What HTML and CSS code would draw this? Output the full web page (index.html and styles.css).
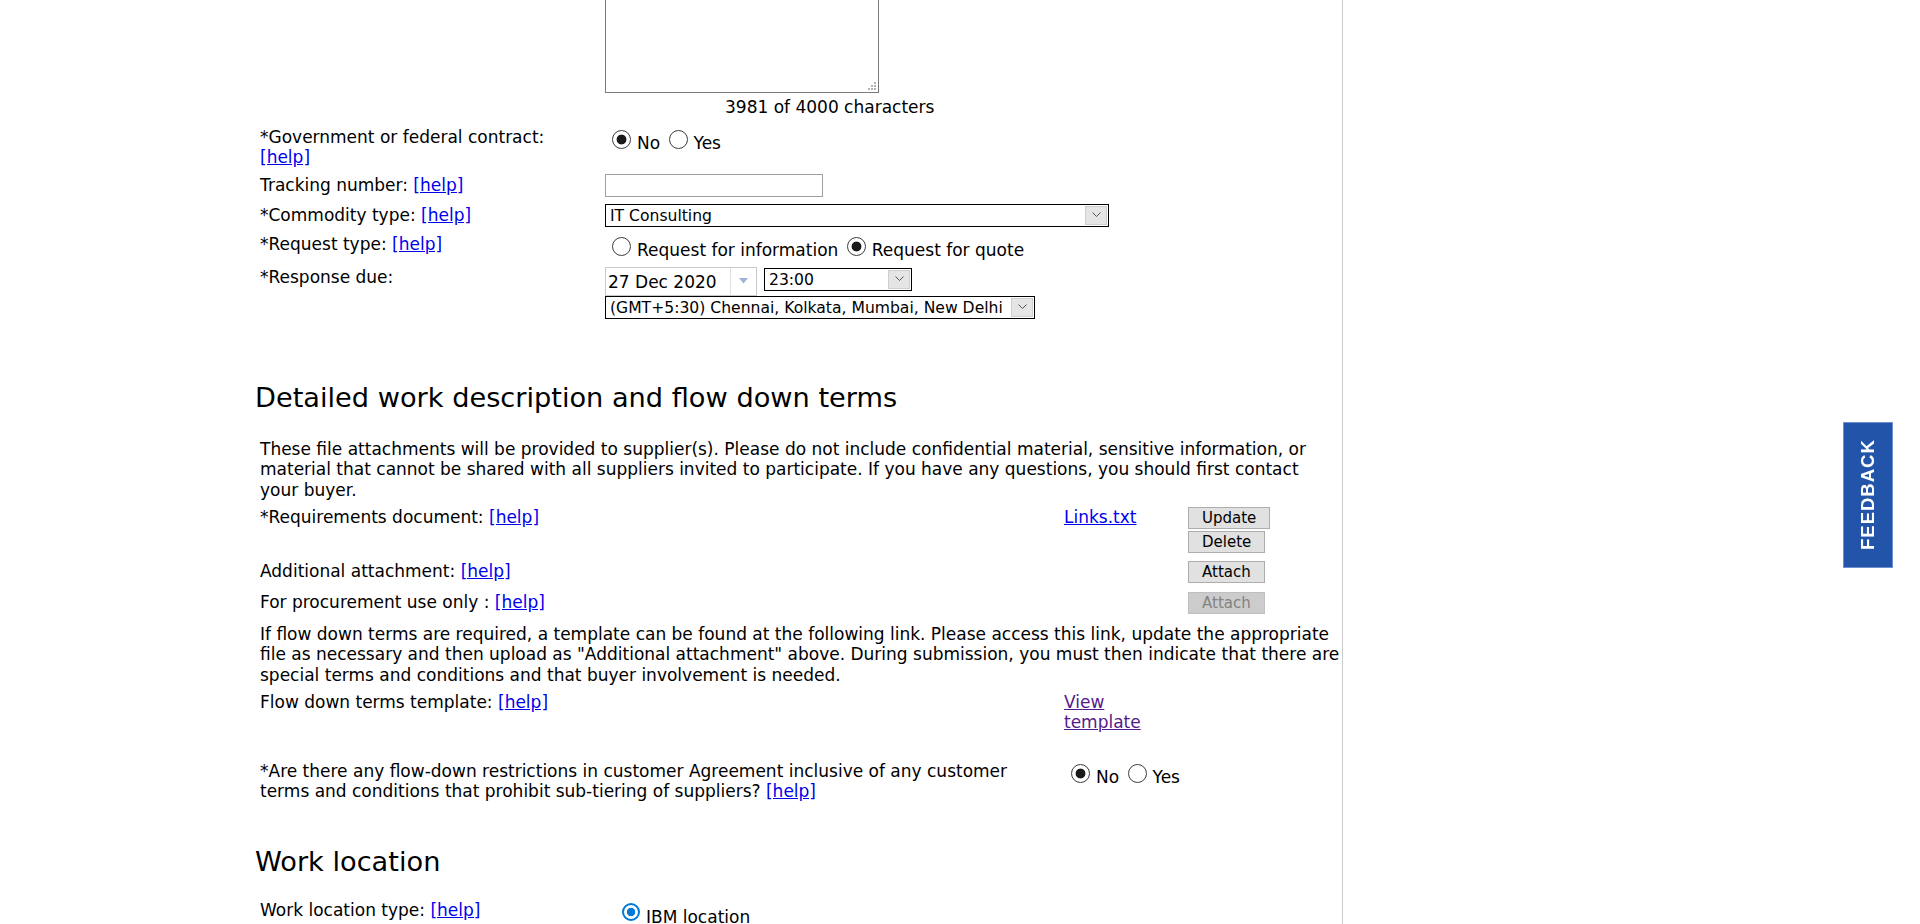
FILE: index.html
```html
<!DOCTYPE html>
<html lang="en">
<head>
<meta charset="utf-8">
<title>Request</title>
<link rel="stylesheet" href="styles.css">
</head>
<body>
<div class="page">
  <main class="main">
    <div class="form">
      <div class="row row-ta">
        <div class="lbl"></div>
        <div class="fld"><div class="ta-wrap"><textarea class="ta"></textarea></div></div>
      </div>
      <div class="row row-count">
        <div class="lbl"></div>
        <div class="fld count">3981 of 4000 characters</div>
      </div>
      <div class="row row-gov">
        <div class="lbl">*Government or federal contract: <a href="#">[help]</a></div>
        <div class="fld radios"><label><input type="radio" name="gov" checked>No</label> <label><input type="radio" name="gov">Yes</label></div>
      </div>
      <div class="row row-track">
        <div class="lbl">Tracking number: <a href="#">[help]</a></div>
        <div class="fld"><input class="txt" type="text"></div>
      </div>
      <div class="row row-comm">
        <div class="lbl">*Commodity type: <a href="#">[help]</a></div>
        <div class="fld"><div class="sel sel-comm"><span class="sel-val">IT Consulting</span><span class="sel-arrow"><svg width="9" height="6" viewBox="0 0 9 6"><polyline points="0.5,0.5 4.5,4.5 8.5,0.5" fill="none" stroke="#555" stroke-width="1"/></svg></span></div></div>
      </div>
      <div class="row row-req">
        <div class="lbl">*Request type: <a href="#">[help]</a></div>
        <div class="fld radios"><label><input type="radio" name="req">Request for information</label> <label><input type="radio" name="req" checked>Request for quote</label></div>
      </div>
      <div class="row row-resp">
        <div class="lbl">*Response due:</div>
        <div class="fld">
          <div class="dt-line">
            <div class="date"><span class="date-val">27 Dec 2020</span><span class="date-btn"><svg width="9" height="6" viewBox="0 0 9 6"><polygon points="0,0 9,0 4.5,5.5" fill="#9fb2d6"/></svg></span></div>
            <div class="sel sel-time"><span class="sel-val">23:00</span><span class="sel-arrow"><svg width="9" height="6" viewBox="0 0 9 6"><polyline points="0.5,0.5 4.5,4.5 8.5,0.5" fill="none" stroke="#555" stroke-width="1"/></svg></span></div>
          </div>
          <div class="sel sel-tz"><span class="sel-val">(GMT+5:30) Chennai, Kolkata, Mumbai, New Delhi</span><span class="sel-arrow"><svg width="9" height="6" viewBox="0 0 9 6"><polyline points="0.5,0.5 4.5,4.5 8.5,0.5" fill="none" stroke="#555" stroke-width="1"/></svg></span></div>
        </div>
      </div>
    </div>

    <h2 class="sec sec-detail">Detailed work description and flow down terms</h2>

    <div class="att">
      <p class="note note-1">These file attachments will be provided to supplier(s). Please do not include confidential material, sensitive information, or material that cannot be shared with all suppliers invited to participate. If you have any questions, you should first contact your buyer.</p>
      <div class="arow arow-req">
        <div class="alb">*Requirements document: <a href="#">[help]</a></div>
        <div class="afile"><a href="#">Links.txt</a></div>
        <div class="abtns"><button class="btn">Update</button><button class="btn">Delete</button></div>
      </div>
      <div class="arow arow-add">
        <div class="alb">Additional attachment: <a href="#">[help]</a></div>
        <div class="afile"></div>
        <div class="abtns"><button class="btn">Attach</button></div>
      </div>
      <div class="arow arow-proc">
        <div class="alb">For procurement use only : <a href="#">[help]</a></div>
        <div class="afile"></div>
        <div class="abtns"><button class="btn" disabled>Attach</button></div>
      </div>
      <p class="note note-2">If flow down terms are required, a template can be found at the following link. Please access this link, update the appropriate file as necessary and then upload as "Additional attachment" above. During submission, you must then indicate that there are special terms and conditions and that buyer involvement is needed.</p>
      <div class="arow arow-tpl">
        <div class="alb">Flow down terms template: <a href="#">[help]</a></div>
        <div class="afile afile-tpl"><a class="visited" href="#">View template</a></div>
        <div class="abtns"></div>
      </div>
      <div class="arow arow-q">
        <div class="alb">*Are there any flow-down restrictions in customer Agreement inclusive of any customer terms and conditions that prohibit sub-tiering of suppliers? <a href="#">[help]</a></div>
        <div class="afile radios radios-q"><label><input type="radio" name="fd" checked>No</label> <label><input type="radio" name="fd">Yes</label></div>
      </div>
    </div>

    <h2 class="sec sec-loc">Work location</h2>

    <div class="form form-loc">
      <div class="row row-loc">
        <div class="lbl">Work location type: <a href="#">[help]</a></div>
        <div class="fld radios radios-loc"><label><input class="modern" type="radio" name="loc" checked>IBM location</label></div>
      </div>
    </div>
  </main>
  <div class="side"></div>
</div>
<a class="feedback" href="#">FEEDBACK</a>
</body>
</html>
```

FILE: styles.css
```css
html, body {
  margin: 0;
  padding: 0;
  height: 100%;
  overflow: hidden;
  background: #fff;
}
body {
  font-family: "DejaVu Sans", Verdana, sans-serif;
  font-size: 17px;
  line-height: 20.8px;
  color: #000;
}
a {
  color: #0000ee;
  text-decoration: underline;
}
a.visited {
  color: #551a8b;
}
.page {
  display: flex;
  height: 100%;
}
.main {
  margin-left: 255px;
  width: 1087px;
  border-right: 1px solid #cccccc;
  flex: none;
}
.side {
  flex: 1;
}

/* form grid */
.form {
  padding-left: 5px;
}
.row {
  display: grid;
  grid-template-columns: 345px 1fr;
  align-items: start;
}
.lbl {
  padding-right: 15px;
}
.fld {
  min-width: 0;
}
.row-ta { margin-top: -17px; }
.ta-wrap {
  position: relative;
  width: 274px;
}
.ta {
  display: block;
  box-sizing: border-box;
  width: 274px;
  height: 110px;
  border: 1px solid #7a7a7a;
  margin: 0;
  resize: none;
  font: inherit;
}
.ta-wrap::after {
  content: "";
  position: absolute;
  right: 3px;
  bottom: 3px;
  width: 8px;
  height: 8px;
  background:
    linear-gradient(#b4b4b4, #b4b4b4) 6px 0 / 2px 2px no-repeat,
    linear-gradient(#b4b4b4, #b4b4b4) 3px 3px / 2px 2px no-repeat,
    linear-gradient(#b4b4b4, #b4b4b4) 6px 3px / 2px 2px no-repeat,
    linear-gradient(#b4b4b4, #b4b4b4) 0 6px / 2px 2px no-repeat,
    linear-gradient(#b4b4b4, #b4b4b4) 3px 6px / 2px 2px no-repeat,
    linear-gradient(#b4b4b4, #b4b4b4) 6px 6px / 2px 2px no-repeat;
}
.row-count { margin-top: 4px; }
.count { padding-left: 120px; }
.row-gov { margin-top: 8.8px; }
.row-track { margin-top: 5.8px; align-items: center; }
.row-comm { margin-top: 7px; align-items: center; }
.row-req { margin-top: 6.6px; }
.row-resp { margin-top: 6.1px; }

.radios {
  padding-top: 6.5px;
  padding-left: 4px;
  white-space: nowrap;
  line-height: 20.8px;
}
.radios label { cursor: default; }
input[type="radio"] {
  -webkit-appearance: none;
  appearance: none;
  box-sizing: border-box;
  width: 19px;
  height: 19px;
  border: 1px solid #3c3c3c;
  border-radius: 50%;
  background: #fff;
  margin: -3.5px 6px 0 3px;
  vertical-align: top;
}
input[type="radio"]:checked {
  background: radial-gradient(circle, #1a1a1a 0 4.5px, #fff 5.3px);
}
input[type="radio"].modern {
  width: 18px;
  height: 18px;
  border: 2px solid #0078d7;
}
input[type="radio"].modern:checked {
  background: radial-gradient(circle, #0078d7 0 3.8px, #fff 4.6px);
}

.txt {
  box-sizing: border-box;
  width: 218px;
  height: 23px;
  border: 1px solid #a0a0a0;
  margin: 0;
  padding: 0 2px;
  font: inherit;
  display: block;
}

.sel {
  box-sizing: border-box;
  display: flex;
  align-items: stretch;
  height: 23px;
  border: 1px solid #000;
  background: #fff;
  font-size: 15.6px;
  line-height: 19px;
}
.sel-val {
  flex: 1;
  padding: 2px 0 0 4px;
  white-space: nowrap;
  overflow: hidden;
}
.sel-arrow {
  flex: none;
  width: 20px;
  margin: 1px 1px 1px 0;
  background: #e5e5e5;
  border: 1px solid #cfcfcf;
  display: flex;
  align-items: center;
  justify-content: center;
}
.sel-comm { width: 504px; }
.sel-time { width: 148px; margin-top: 1px; }
.sel-tz { width: 430px; }

.dt-line {
  display: flex;
  align-items: flex-start;
  gap: 7px;
}
.date {
  box-sizing: border-box;
  width: 152px;
  height: 29px;
  border: 1px solid #c9c9c9;
  display: flex;
  align-items: stretch;
}
.date-val {
  flex: 1;
  font-size: 17px;
  line-height: 25px;
  padding: 2px 0 0 2px;
  white-space: nowrap;
}
.date-btn {
  width: 25px;
  border-left: 1px solid #e0e0e0;
  display: flex;
  align-items: center;
  justify-content: center;
}

/* section headings */
.sec {
  font-size: 27.2px;
  font-weight: normal;
  line-height: 32px;
  margin: 0;
}
.sec-detail { margin-top: 62.6px; }
.sec-loc { margin-top: 44px; }

/* attachments block */
.att {
  padding-left: 5px;
}
.note {
  margin: 0;
  width: 1079px;
}
.note-1 { margin-top: 25px; }
.note-2 { margin-top: 9.6px; width: 1083px; }
.arow {
  display: grid;
  grid-template-columns: 804px 124px 1fr;
  align-items: start;
}
.arow-req { margin-top: 6px; }
.arow-add { margin-top: 8px; }
.arow-proc { margin-top: 9px; }
.arow-tpl { margin-top: 5.6px; }
.arow-q { margin-top: 27.4px; }
.alb { padding-right: 10px; }
.afile-tpl { width: 80px; }
.abtns {
  display: flex;
  flex-direction: column;
  align-items: flex-start;
  gap: 2px;
}
.btn {
  box-sizing: border-box;
  height: 22px;
  padding: 0 13px;
  margin: 0;
  border: 1px solid #adadad;
  background: #e1e1e1;
  color: #000;
  font-family: inherit;
  font-size: 15px;
  line-height: 20px;
}
.btn:disabled {
  background: #cccccc;
  border-color: #bfbfbf;
  color: #838383;
}
.radios-q { padding-left: 4px; grid-column: 2 / 4; }

.form-loc .row-loc { margin-top: 22px; }
.radios-loc { padding-left: 14px; }

/* feedback tab */
.feedback {
  position: fixed;
  right: 27px;
  top: 422px;
  width: 50px;
  height: 146px;
  box-sizing: border-box;
  background: #2254a9;
  border: 1px solid #6f8fcf;
  color: #fff;
  text-decoration: none;
  font-family: "Liberation Sans", Arial, sans-serif;
  font-weight: bold;
  font-size: 18.5px;
  letter-spacing: 1px;
  writing-mode: vertical-rl;
  transform: rotate(180deg);
  display: flex;
  align-items: center;
  justify-content: center;
}
```
